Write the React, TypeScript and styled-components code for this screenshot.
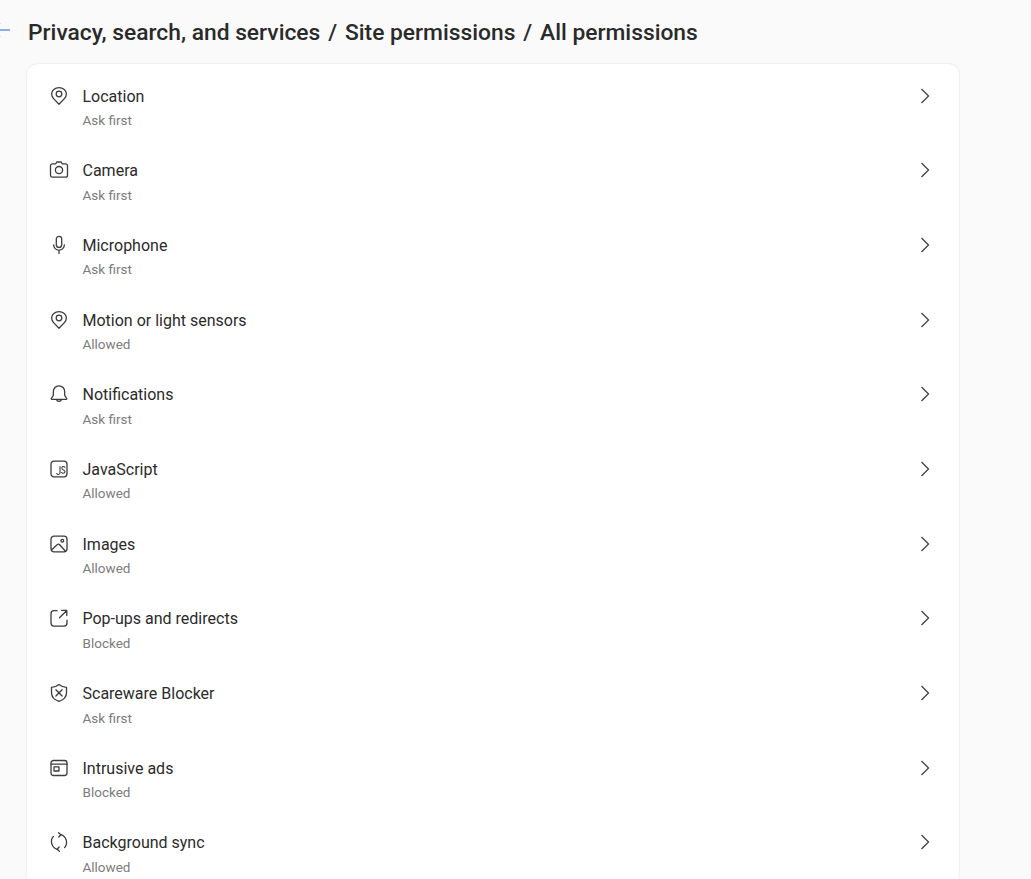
import React from "react";
import styled, { createGlobalStyle } from "styled-components";

const Global = createGlobalStyle`
  html, body { margin: 0; padding: 0; height: 879px; overflow: hidden; background: #fafafa; }
  body { font-family: Roboto, "Liberation Sans", sans-serif; }
`;

const Page = styled.main`
  height: 879px;
  overflow: hidden;
  padding: 15px 72px 0 0;
  box-sizing: border-box;
`;

const Header = styled.header`
  display: flex;
  align-items: center;
  height: 34px;
  margin-bottom: 15px;
`;

const BackIcon = styled.svg`
  width: 20px;
  height: 20px;
  margin-left: -10px;
  margin-right: 18px;
  margin-top: -4px;
  flex: none;
  color: #1a64d8;
`;

const Title = styled.h1`
  margin: 2px 0 0;
  font-size: 22.8px;
  line-height: 34px;
  font-weight: 500;
  color: #2a2a2a;
  white-space: nowrap;
`;

const Sep = styled.span`
  margin: 0 2.2px;
`;

const Card = styled.section`
  margin-left: 27px;
  background: #fff;
  border-radius: 10px;
  box-shadow: 0 0 2px rgba(0, 0, 0, 0.14);
`;

const Row = styled.div`
  height: 74.7px;
  display: flex;
  align-items: flex-start;
  padding: 20.5px 24px 0 22px;
  box-sizing: border-box;
`;

const IconBox = styled.span`
  width: 20px;
  height: 20px;
  margin-top: 1px;
  margin-right: 13.5px;
  flex: none;
  color: #3c3c3c;
  & svg { display: block; width: 20px; height: 20px; }
`;

const Texts = styled.div`
  flex: 1;
  min-width: 0;
`;

const Name = styled.div`
  font-size: 16px;
  line-height: 24px;
  color: #2b2b2b;
`;

const Status = styled.div`
  font-size: 13.5px;
  line-height: 18px;
  margin-top: 2.5px;
  color: #7c7c7c;
`;

const Chevron = styled.svg`
  width: 20px;
  height: 20px;
  margin-top: 1px;
  flex: none;
  color: #424242;
`;

const S = { fill: "none", stroke: "currentColor", strokeWidth: 1.3, strokeLinecap: "round" as const, strokeLinejoin: "round" as const };

const Pin = () => (
  <svg viewBox="0 0 20 20" {...S}>
    <path d="M10 18.200 4.600 12.600a7.400 7.400 0 0 1-2-4.800C2.600 4.400 6 1.700 10 1.700s7.400 2.700 7.400 6.100a7.400 7.400 0 0 1-2 4.800Z" />
    <circle cx="10" cy="8" r="2.800" />
  </svg>
);
const icons: Record<string, React.ReactNode> = {
  pin: <Pin />,
  camera: (
    <svg viewBox="0 0 20 20" {...S}>
      <path d="M6.800 3.800 7.800 2h4.400l1 1.800H16.500a2 2 0 0 1 2 2v9.400a2 2 0 0 1-2 2h-13a2 2 0 0 1-2-2V5.800a2 2 0 0 1 2-2Z" />
      <circle cx="10" cy="10.100" r="3.600" />
    </svg>
  ),
  mic: (
    <svg viewBox="0 0 20 20" {...S}>
      <rect x="7.300" y="1.400" width="5.400" height="11" rx="2.700" />
      <path d="M4.600 9.800a5.400 5.400 0 0 0 10.800 0M10 15.200v3.400" />
    </svg>
  ),
  bell: (
    <svg viewBox="0 0 20 20" {...S}>
      <path d="M10 1.800c-3.300 0-5.700 2.600-5.700 5.900v3.700l-2 3.100a.5.500 0 0 0 .4.800h14.600a.5.500 0 0 0 .4-.8l-2-3.100V7.700c0-3.300-2.400-5.900-5.700-5.900Z" />
      <path d="M7.500 15.500a2.600 2.600 0 0 0 5 0" />
    </svg>
  ),
  js: (
    <svg viewBox="0 0 20 20" {...S}>
      <rect x="2" y="2.200" width="16" height="15.600" rx="3" />
      <path d="M11 7.500v6.500a1.700 1.700 0 0 1-3.200.5M15.800 8.400c-.5-1.200-3-1.400-3 .7 0 2.100 3.200 1.500 3.200 3.500s-2.900 1.900-3.500.9" strokeWidth="1.100" />
    </svg>
  ),
  image: (
    <svg viewBox="0 0 20 20" {...S}>
      <rect x="2" y="2.200" width="16" height="15.600" rx="3" />
      <path d="m2.500 16 5.900-5.500a1.400 1.400 0 0 1 2 0l5.900 6.500" />
      <circle cx="13.300" cy="6.700" r="1.400" />
    </svg>
  ),
  popup: (
    <svg viewBox="0 0 20 20" {...S}>
      <path d="M8 2.700H5a3 3 0 0 0-3 3v9.400a3 3 0 0 0 3 3h10a3 3 0 0 0 3-3v-3" />
      <path d="M10.500 9.800 17.800 2.500M12.600 2.300h5.200v5.200" />
    </svg>
  ),
  shield: (
    <svg viewBox="0 0 20 20" {...S}>
      <path d="M10 1.600c2 1.700 4.600 2.700 7.500 2.700v5.400c0 3.900-2.500 7-7.500 8.700-5-1.700-7.500-4.800-7.500-8.700V4.300c2.900 0 5.500-1 7.500-2.700Z" />
      <path d="m6.900 6.800 6.200 6.200m0-6.200-6.200 6.200" />
    </svg>
  ),
  ads: (
    <svg viewBox="0 0 20 20" {...S}>
      <rect x="2" y="2.500" width="16" height="15" rx="2.500" />
      <path d="M2 6.200h16" />
      <rect x="5" y="8.800" width="5" height="4.200" />
    </svg>
  ),
  sync: (
    <svg viewBox="0 0 20 20" {...S}>
      <path d="M11.800 2.700a8 8 0 0 1 3.800 12.900M8.200 17.300A8 8 0 0 1 4.400 4.400" />
      <path d="M9.600.7l2.200 2-2 2.300M10.400 19.300l-2.200-2 2-2.300" />
    </svg>
  ),
};

const rows = [
  ["pin", "Location", "Ask first"],
  ["camera", "Camera", "Ask first"],
  ["mic", "Microphone", "Ask first"],
  ["pin", "Motion or light sensors", "Allowed"],
  ["bell", "Notifications", "Ask first"],
  ["js", "JavaScript", "Allowed"],
  ["image", "Images", "Allowed"],
  ["popup", "Pop-ups and redirects", "Blocked"],
  ["shield", "Scareware Blocker", "Ask first"],
  ["ads", "Intrusive ads", "Blocked"],
  ["sync", "Background sync", "Allowed"],
];

export default function App() {
  return (
    <>
      <Global />
      <Page>
        <Header>
          <BackIcon viewBox="0 0 20 20" fill="none" stroke="currentColor" strokeWidth="1.200">
            <path d="M20 10H3M10 3l-7 7 7 7" />
          </BackIcon>
          <Title>
            Privacy, search, and services <Sep>/</Sep> Site permissions <Sep>/</Sep> All permissions
          </Title>
        </Header>
        <Card>
          {rows.map(([icon, name, status]) => (
            <Row key={name}>
              <IconBox>{icons[icon]}</IconBox>
              <Texts>
                <Name>{name}</Name>
                <Status>{status}</Status>
              </Texts>
              <Chevron viewBox="0 0 20 20" fill="none" stroke="currentColor" strokeWidth="1.300">
                <path d="m6.500 3 7 7-7 7" />
              </Chevron>
            </Row>
          ))}
        </Card>
      </Page>
    </>
  );
}
